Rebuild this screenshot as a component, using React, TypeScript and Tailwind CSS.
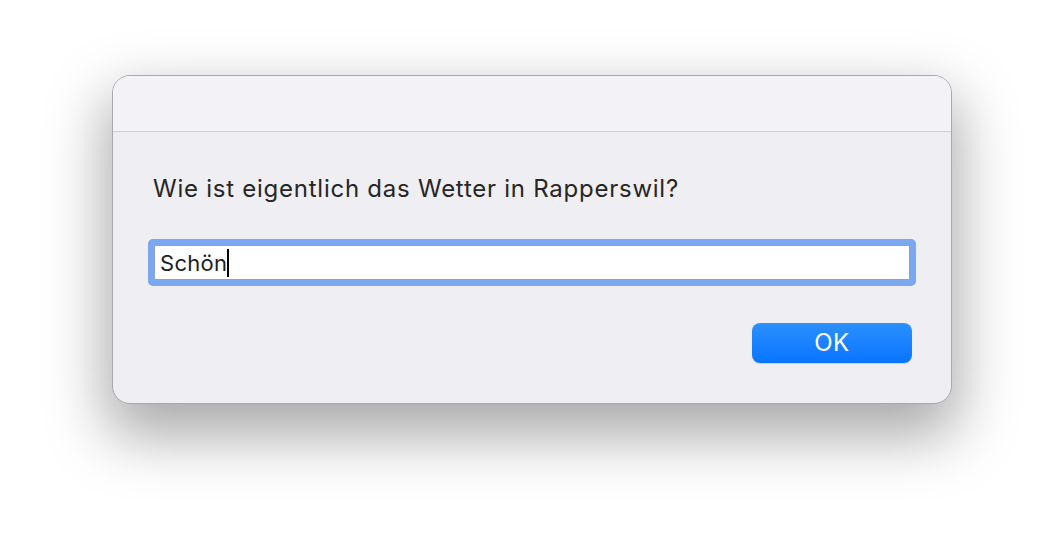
export default function App() {
  return (
    <div
      className="w-[1064px] h-[552px] bg-white pt-[75px] flex justify-center"
      style={{ fontFamily: "Inter, 'Liberation Sans', sans-serif" }}
    >
      <div className="w-[840px] h-[329px] rounded-[18px] border border-[#a9a8ad] bg-[#efeef2] overflow-hidden flex flex-col shadow-[0_26px_60px_6px_rgba(0,0,0,0.34)]">
        <div className="h-[56px] shrink-0 bg-[#f3f2f6] border-b border-[#cfced3]" />
        <div className="flex flex-col px-[35px]">
          <p className="mt-[43px] ml-[5px] text-[24px] leading-[28px] tracking-[0.75px] text-[#262626]">
            Wie ist eigentlich das Wetter in Rapperswil?
          </p>
          <div className="mt-[36px] h-[47px] rounded-[5px] bg-[#7ba8f1] p-[6px]">
            <div className="h-full bg-white border border-[#8aa3c9] flex items-center pl-[5px]">
              <span className="text-[22px] leading-none tracking-[0.3px] text-[#1d1d1f]">Schön</span>
              <span className="w-[2px] h-[28px] bg-black" />
            </div>
          </div>
          <div className="mt-[37px] flex justify-end pr-[4px]">
            <button className="w-[160px] h-[40px] rounded-[8px] bg-gradient-to-b from-[#2b90ff] to-[#0674ff] text-white text-[24px] leading-none tracking-[0.5px] shadow-[0_1px_1px_rgba(0,0,0,0.12)]">
              OK
            </button>
          </div>
        </div>
      </div>
    </div>
  );
}
